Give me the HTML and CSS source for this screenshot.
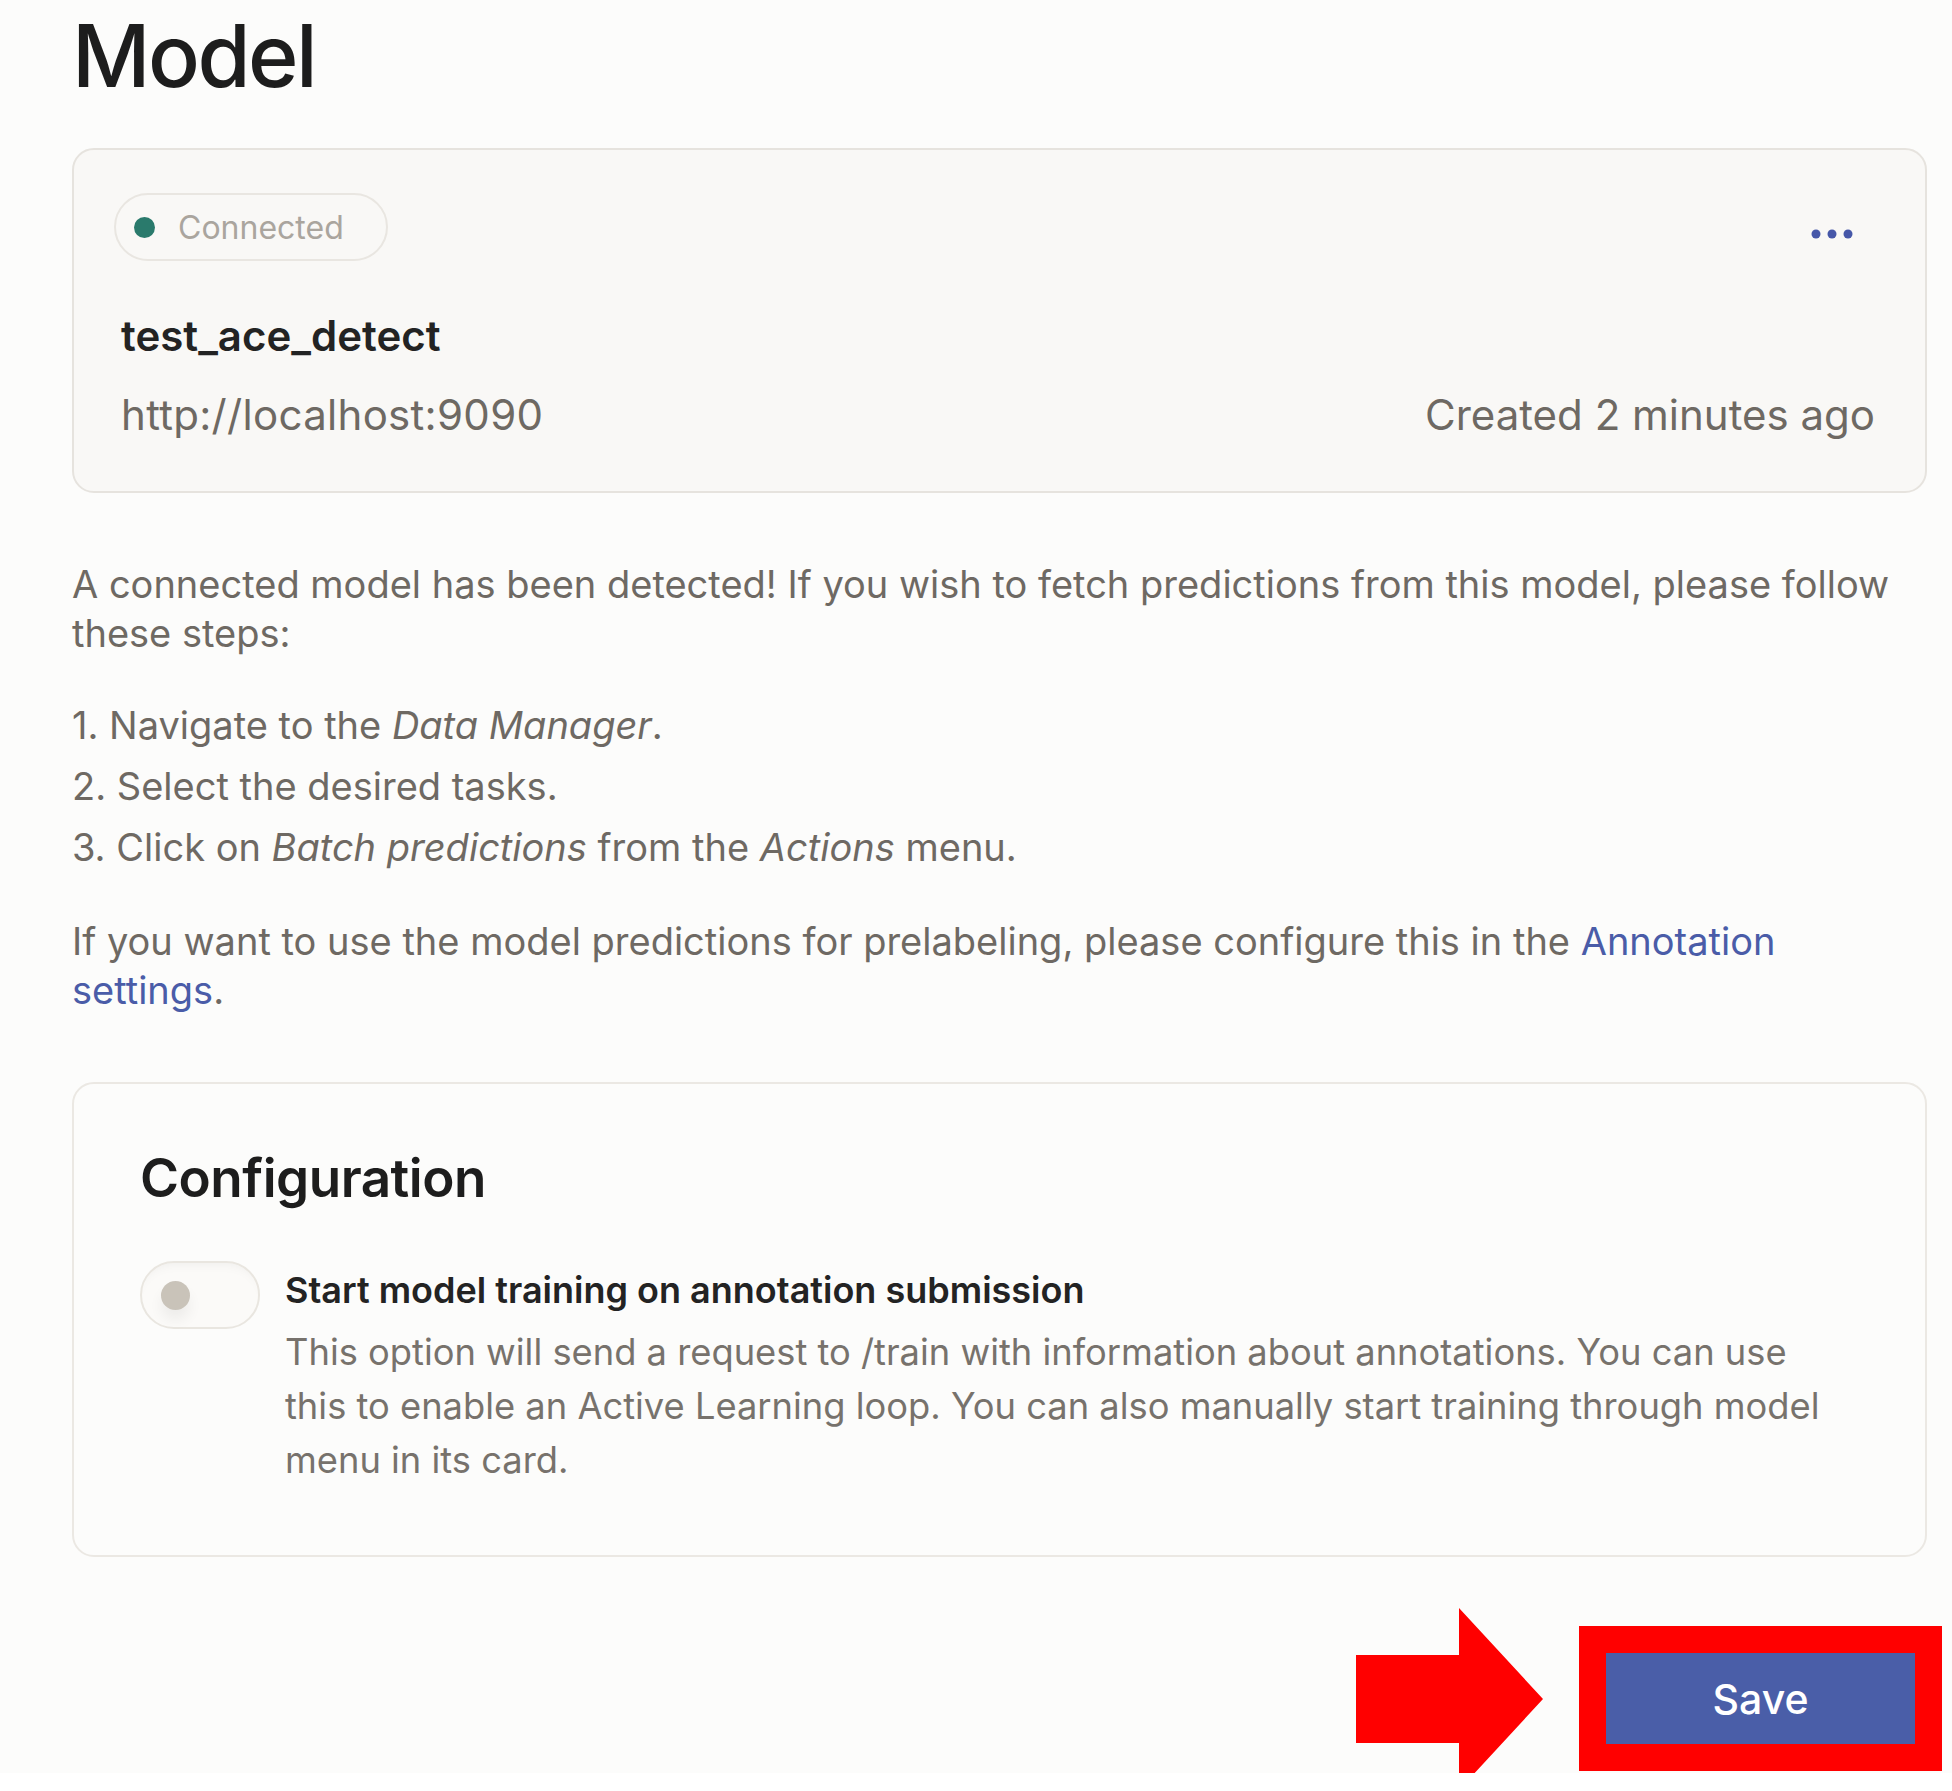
FILE: index.html
```html
<!DOCTYPE html>
<html lang="en">
<head>
    <meta charset="UTF-8">
    <meta name="viewport" content="width=device-width, initial-scale=1.0">
    <title>Model settings</title>
    <link rel="stylesheet" href="styles.css">
</head>
<body>
    <div class="page">
        <h1>Model</h1>

        <!-- connected model card -->
        <div class="model-card">
            <div class="card-top">
                <span class="status"><span class="status-dot"></span>Connected</span>
                <button type="button" class="menu-btn" aria-label="Model menu">
                    <svg width="44" height="12" viewBox="0 0 44 12">
                        <circle cx="6" cy="6" r="4.5" fill="#4657a8"/>
                        <circle cx="22" cy="6" r="4.5" fill="#4657a8"/>
                        <circle cx="38" cy="6" r="4.5" fill="#4657a8"/>
                    </svg>
                </button>
            </div>
            <div class="model-name">test_ace_detect</div>
            <div class="card-bottom">
                <span class="model-url">http://localhost:9090</span>
                <span class="model-created">Created 2 minutes ago</span>
            </div>
        </div>

        <div class="info">
            <p>A connected model has been detected! If you wish to fetch predictions from this model, please follow these steps:</p>
            <ol class="steps">
                <li>1. Navigate to the <em>Data Manager</em>.</li>
                <li>2. Select the desired tasks.</li>
                <li>3. Click on <em>Batch predictions</em> from the <em>Actions</em> menu.</li>
            </ol>
            <p>If you want to use the model predictions for prelabeling, please configure this in the <a href="#">Annotation settings</a>.</p>
        </div>

        <!-- configuration section -->
        <div class="config-card">
            <h2>Configuration</h2>
            <div class="option">
                <label class="toggle">
                    <input type="checkbox">
                    <span class="knob"></span>
                </label>
                <div class="option-text">
                    <div class="option-title">Start model training on annotation submission</div>
                    <div class="option-desc">This option will send a request to /train with information about annotations. You can use this to enable an Active Learning loop. You can also manually start training through model menu in its card.</div>
                </div>
            </div>
        </div>

        <div class="actions">
            <div class="highlight">
                <svg class="arrow" width="188" height="182" viewBox="0 0 188 182">
                    <polygon points="0,47 103,47 103,0 187,91 103,182 103,135 0,135" fill="#ff0000"/>
                </svg>
                <button type="button" class="save-btn">Save</button>
            </div>
        </div>
    </div>
</body>
</html>
```

FILE: styles.css
```css
html {
    background: #ffffff;
}
body {
    margin: 0;
    font-family: Inter, "Noto Sans", sans-serif;
    color: #6e6963;
}
.page {
    background: #fcfcfb;
    padding: 0 25px 2px 72px;
}
h1 {
    margin: 0;
    padding-top: 4px;
    font-size: 86px;
    font-weight: 500;
    line-height: 104px;
    color: #1d1d1d;
    letter-spacing: -2.5px;
}
.model-card {
    margin-top: 40px;
    height: 345px;
    box-sizing: border-box;
    background: #f9f8f6;
    border: 2px solid #e6e3de;
    border-radius: 22px;
    padding: 43px 40px 0 40px;
}
.card-top {
    display: flex;
    justify-content: space-between;
    align-items: center;
}
.status {
    display: inline-flex;
    align-items: center;
    height: 68px;
    box-sizing: border-box;
    padding: 0 42px 0 18px;
    border: 2px solid #e9e6e1;
    border-radius: 34px;
    font-size: 32px;
    color: #aaa59e;
}
.status-dot {
    width: 21px;
    height: 21px;
    border-radius: 50%;
    background: #2a7a6c;
    margin-right: 23px;
}
.menu-btn {
    border: none;
    background: none;
    padding: 0;
    margin: 14px 31px 0 0;
    cursor: pointer;
    line-height: 0;
}
.model-name {
    margin-top: 51px;
    padding-left: 7px;
    font-size: 42px;
    font-weight: 600;
    color: #232323;
    line-height: 48px;
}
.card-bottom {
    display: flex;
    justify-content: space-between;
    margin-top: 30px;
    padding: 0 10px 0 7px;
    font-size: 42px;
    line-height: 50px;
    color: #6e6963;
}
.model-url {
    letter-spacing: 0.3px;
}
.info {
    max-width: 1840px;
    margin-top: 67px;
    font-size: 38px;
    line-height: 49px;
}
.info p {
    margin: 0;
}
.steps {
    list-style: none;
    margin: 37px 0 39px 0;
    padding: 0;
    line-height: 61px;
}
.info a {
    color: #4a5ca8;
    text-decoration: none;
}
.config-card {
    margin-top: 67px;
    height: 475px;
    box-sizing: border-box;
    border: 2px solid #ebe8e3;
    border-radius: 22px;
    padding: 64px 66px 0 66px;
}
h2 {
    margin: 0;
    font-size: 53px;
    font-weight: 600;
    line-height: 60px;
    color: #1d1d1d;
    letter-spacing: -0.5px;
}
.option {
    display: flex;
    margin-top: 53px;
}
.toggle {
    position: relative;
    flex: none;
    width: 120px;
    height: 68px;
    box-sizing: border-box;
    border: 2px solid #e9e6e0;
    border-radius: 34px;
    background: #fbfaf8;
    box-shadow: inset 0 10px 14px -12px rgba(0, 0, 0, 0.08);
    margin-right: 25px;
    cursor: pointer;
}
.toggle input {
    display: none;
}
.knob {
    position: absolute;
    left: 19px;
    top: 18px;
    width: 29px;
    height: 29px;
    border-radius: 50%;
    background: #c9c3b9;
    box-shadow: 0 10px 14px rgba(0, 0, 0, 0.06);
}
.option-text {
    max-width: 1540px;
}
.option-title {
    margin-top: 7px;
    font-size: 36px;
    font-weight: 600;
    line-height: 44px;
    color: #232323;
}
.option-desc {
    margin-top: 13px;
    font-size: 36.3px;
    line-height: 54px;
    color: #77726c;
}
.actions {
    display: flex;
    justify-content: flex-end;
    margin: 69px -15px 0 0;
}
.highlight {
    position: relative;
    border: 27px solid #ff0000;
    line-height: 0;
}
.arrow {
    position: absolute;
    right: calc(100% + 62px);
    top: 50%;
    transform: translateY(-50%);
}
.save-btn {
    width: 309px;
    height: 91px;
    border: none;
    background: #4a5ea8;
    color: #ffffff;
    font-family: Inter, "Noto Sans", sans-serif;
    font-size: 41px;
    font-weight: 500;
    cursor: pointer;
}
```
